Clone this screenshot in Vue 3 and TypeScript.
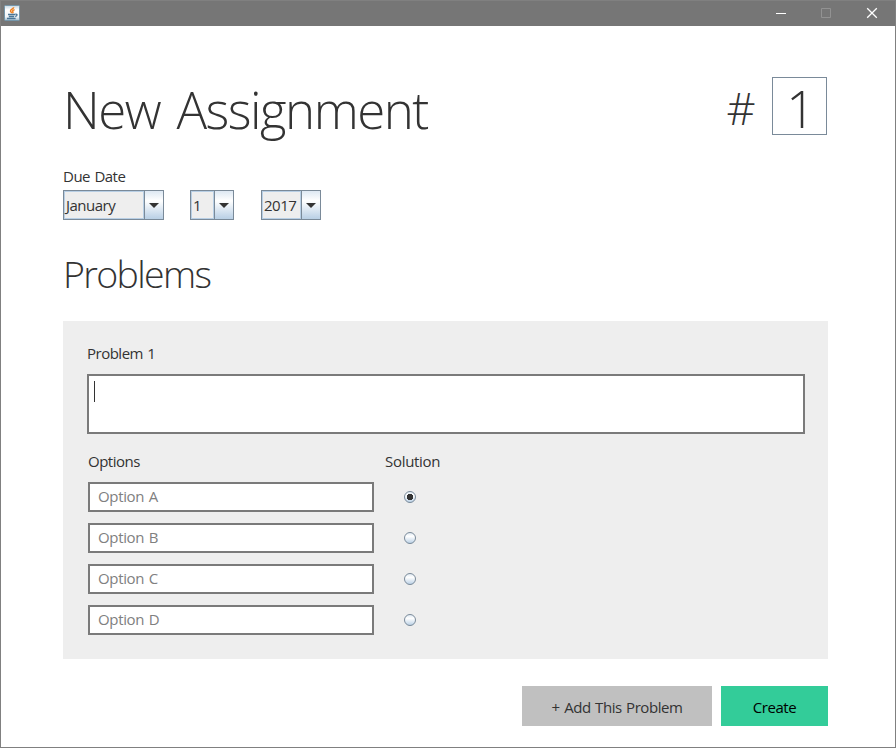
<script setup lang="ts">
import { ref } from 'vue'

interface Combo { name: string; value: string; width: number }
interface Option { letter: string; text: string }

const dueDate: Combo[] = [
  { name: 'month', value: 'January', width: 101 },
  { name: 'day', value: '1', width: 44 },
  { name: 'year', value: '2017', width: 60 },
]
const options = ref<Option[]>(['A', 'B', 'C', 'D'].map((letter) => ({ letter, text: '' })))
const solution = ref('A')
</script>

<template>
  <div class="window">
    <header class="titlebar">
      <svg class="app-icon" width="16" height="16" viewBox="0 0 16 16">
        <defs>
          <linearGradient id="iconbg" x1="0" y1="0" x2="0" y2="1">
            <stop offset="0" stop-color="#c9d8e2" />
            <stop offset=".3" stop-color="#fff" />
            <stop offset=".75" stop-color="#f1f5f8" />
            <stop offset="1" stop-color="#9fbacb" />
          </linearGradient>
        </defs>
        <rect x=".5" y=".5" width="15" height="15" rx="1" fill="url(#iconbg)" stroke="#7596aa" />
        <path d="M9.7 2.2C9.8 4 6.2 4.4 6.5 6c.2 1 1.1 1.3 1.2 2.2M10.6 4.6C8.5 5.4 8.3 6 8.9 6.8c.4.6 0 1-.5 1.4" fill="none" stroke="#ee8222" stroke-width="1.5" />
        <path d="M4 9.5h7.2M4.8 11.5h5.4M3 13.5h8.6M11.4 9.2c2.3-.3 2.2 1.8-.2 2.3" fill="none" stroke="#4a7696" stroke-width="1.3" />
      </svg>
      <div class="controls">
        <svg width="46" height="24" viewBox="0 0 46 24"><path d="M16 12.5h10" stroke="#fff" /></svg>
        <svg width="46" height="24" viewBox="0 0 46 24"><path d="M15.5 7.5h9v9h-9z" fill="none" stroke="#929292" /></svg>
        <svg width="46" height="24" viewBox="0 0 46 24"><path d="M15.2 7.2l9.6 9.6M24.8 7.2l-9.6 9.6" stroke="#fff" stroke-width="1.3" /></svg>
      </div>
    </header>

    <main class="content">
      <div class="heading">
        <h1>New Assignment</h1>
        <span class="hash">#</span>
        <div class="number"><span>1</span></div>
      </div>

      <div class="due-label"><span>Due Date</span></div>
      <div class="combos">
        <div v-for="c in dueDate" :key="c.name" class="combo" :class="c.name" :style="{ width: c.width + 'px' }">
          <div class="value"><span>{{ c.value }}</span></div>
          <div class="arrow">
            <svg width="10" height="5" viewBox="0 0 10 5"><path d="M0 0h10L5 5z" fill="#333" /></svg>
          </div>
        </div>
      </div>

      <h2>Problems</h2>

      <section class="panel">
        <div class="problem-label"><span>Problem 1</span></div>
        <div class="textarea"><i class="caret"></i></div>
        <div class="labels">
          <span class="options-label">Options</span>
          <span class="solution-label">Solution</span>
        </div>
        <div v-for="o in options" :key="o.letter" class="option">
          <input v-model="o.text" class="field" type="text" :placeholder="'Option ' + o.letter" />
          <button class="radio" :class="{ on: solution === o.letter }" @click="solution = o.letter">
            <svg width="12" height="12" viewBox="0 0 12 12">
              <defs>
                <linearGradient :id="'rg' + o.letter" x1="0" y1="0" x2="0" y2="1">
                  <stop offset="0" stop-color="#dce7f1" />
                  <stop offset=".35" stop-color="#fff" />
                  <stop offset="1" stop-color="#b8cfe5" />
                </linearGradient>
              </defs>
              <circle cx="6" cy="6" r="5.5" :fill="`url(#rg${o.letter})`" stroke="#7a8a99" />
              <path v-if="solution === o.letter" d="M4 3h4v1h1v4h-1v1h-4v-1h-1v-4h1z" fill="#333" />
            </svg>
          </button>
        </div>
      </section>

      <div class="actions">
        <button class="btn add"><span>+ Add This Problem</span></button>
        <button class="btn create"><span>Create</span></button>
      </div>
    </main>
  </div>
</template>

<style>
body { background: #fff; }
</style>

<style scoped>
* { box-sizing: border-box; }
.window {
  width: 896px;
  height: 748px;
  border: 1px solid #808080;
  background: #fff;
  color: #333;
  font-family: "Open Sans", "Noto Sans", sans-serif;
  font-size: 15px;
  letter-spacing: -0.5px;
  word-spacing: 1px;
  overflow: hidden;
}
.titlebar {
  display: flex;
  justify-content: space-between;
  height: 25px;
  padding-left: 3px;
  background: #767676;
}
.app-icon { margin-top: 4px; }
.controls { display: flex; margin-right: -3px; }
.content { padding: 51px 67px 0 62px; }
.heading { display: flex; align-items: center; height: 58px; }
h1, .hash, .number, h2 { font-weight: 300; }
h1 {
  flex: 1;
  margin: 0;
  padding-top: 6px;
  font-size: 51px;
  line-height: 58px;
  letter-spacing: -1.5px;
  word-spacing: 4.5px;
  white-space: nowrap;
}
.hash { margin-right: 17px; padding-top: 4px; font-size: 45px; line-height: 58px; }
.number {
  display: flex;
  justify-content: center;
  width: 55px;
  height: 58px;
  margin-right: 1px;
  padding-left: 2px;
  border: 1px solid #7a8a99;
  font-size: 51px;
  line-height: 61px;
}
.due-label { height: 55px; padding-top: 31px; line-height: 20px; }
.combos { display: flex; height: 30px; }
.combo { display: flex; border: 1px solid #7a8a99; background: #eee; }
.day { margin-left: 26px; }
.year { margin-left: 27px; }
.value { flex: 1; border: 1px solid #b8cfe5; padding-left: 1px; line-height: 27px; }
.arrow {
  display: flex;
  align-items: center;
  justify-content: center;
  width: 19px;
  border-left: 1px solid #7a8a99;
  background: linear-gradient(#dde8f3 0%, #fff 35%, #b8cfe5 100%);
}
h2 {
  height: 60px;
  margin: 24px 0 17px;
  font-size: 37.5px;
  line-height: 60px;
  letter-spacing: -1.65px;
}
.panel { height: 338px; padding: 21px 23px 0 24px; background: #eee; }
.problem-label { height: 32px; line-height: 23px; }
.textarea { height: 60px; padding: 5px; border: 2px solid #7a7a7a; background: #fff; }
.caret { display: block; width: 1px; height: 21px; background: #333; }
.labels { display: flex; height: 48px; padding: 15px 0 0 1px; line-height: 24px; }
.options-label { width: 297px; }
.solution-label { letter-spacing: -0.3px; }
.option { display: flex; align-items: center; height: 30px; margin: 0 0 11px 1px; }
.field {
  width: 286px;
  height: 30px;
  padding: 0 8px 2px;
  border: 2px solid #7a7a7a;
  border-radius: 0;
  outline: 0;
  background: #fff;
  color: #333;
  font: inherit;
  letter-spacing: -0.35px;
  word-spacing: inherit;
}
.field::placeholder { color: #808080; opacity: 1; }
.radio { display: flex; margin-left: 30px; padding: 0; border: 0; background: none; }
.actions { display: flex; justify-content: flex-end; gap: 9px; margin-top: 27px; }
.btn {
  height: 40px;
  padding: 1px 0 0;
  border: 0;
  font: inherit;
  letter-spacing: -0.45px;
  word-spacing: inherit;
}
.add { width: 190px; background: #c0c0c0; color: #333; }
.create { width: 107px; background: #33cc99; color: #000; }
</style>
